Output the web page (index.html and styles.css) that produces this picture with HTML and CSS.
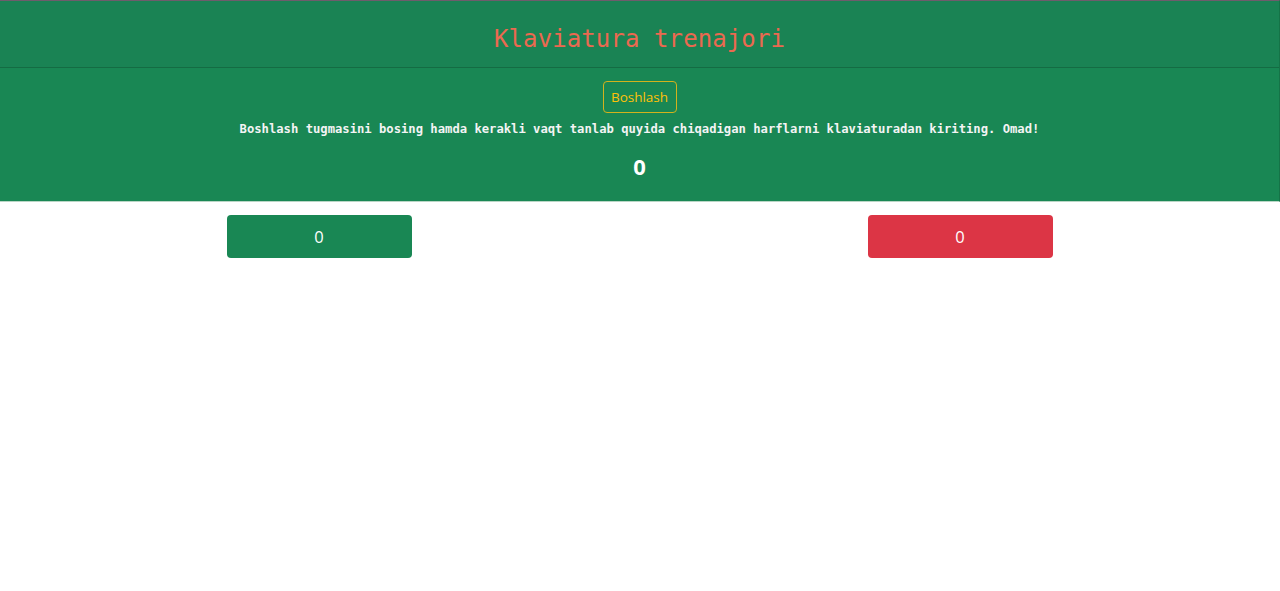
FILE: index.html
```html
<!DOCTYPE html>
<html lang="uz">
<head>
<meta charset="utf-8">
<title>Klaviatura trenajori</title>
<link rel="stylesheet" href="styles.css">
</head>
<body>
<div class="card">
  <div class="card-header">
    <h2 class="title">Klaviatura trenajori</h2>
  </div>
  <div class="card-body">
    <button class="btn-start" type="button">Boshlash</button>
    <p class="info">Boshlash tugmasini bosing hamda kerakli vaqt tanlab quyida chiqadigan harflarni klaviaturadan kiriting. Omad!</p>
    <div class="timer">0</div>
  </div>
</div>
<div class="scores">
  <div class="col col-left"><div class="score score-ok">0</div></div>
  <div class="col col-right"><div class="score score-bad">0</div></div>
</div>
</body>
</html>
```
FILE: styles.css
```css
* { box-sizing: border-box; }
html, body { margin: 0; padding: 0; background: #fff; }
body { font-family: "Open Sans", "Noto Sans", sans-serif; }

.card {
  border-top: 1px solid #6f5c6c;
  border-right: 1px solid #157347;
  border-bottom: 1px solid #b9d6c5;
}
.card-header {
  background: #1a8354;
  height: 67px;
  border-bottom: 1px solid #146c43;
  display: flex;
  align-items: center;
  justify-content: center;
}
.title {
  margin: 0;
  font-family: "DejaVu Sans Mono", "Liberation Mono", monospace;
  font-weight: 400;
  font-size: 24px;
  color: #ec6950;
  letter-spacing: 0.1px;
  padding-top: 9px;
}
.card-body {
  background: #198754;
  height: 133px;
  display: flex;
  flex-direction: column;
  align-items: center;
  padding-top: 13px;
}
.btn-start {
  font-family: "Open Sans", "Noto Sans", sans-serif;
  font-size: 13.5px;
  color: #ffc107;
  background: transparent;
  border: 1px solid #d3b21c;
  border-radius: 4px;
  width: 74px;
  height: 32px;
  padding: 0;
  cursor: pointer;
}
.info {
  margin: 6px 0 0;
  font-family: "DejaVu Sans Mono", "Liberation Mono", monospace;
  font-weight: 700;
  font-size: 12.2px;
  color: #f4f4f4;
  line-height: 20px;
}
.timer {
  margin-top: 12px;
  font-size: 22px;
  font-weight: 700;
  color: #fff;
  line-height: 30px;
}
.scores {
  display: flex;
  padding-top: 13px;
}
.col {
  flex: 1;
  display: flex;
  justify-content: center;
}
.col-left { padding-right: 3px; }
.col-right { padding-right: 1px; }
.score {
  width: 185px;
  height: 43px;
  border-radius: 4px;
  color: #fff;
  font-size: 16.5px;
  display: flex;
  align-items: center;
  justify-content: center;
}
.score-ok { background: #198754; }
.score-bad { background: #dc3545; }
```
